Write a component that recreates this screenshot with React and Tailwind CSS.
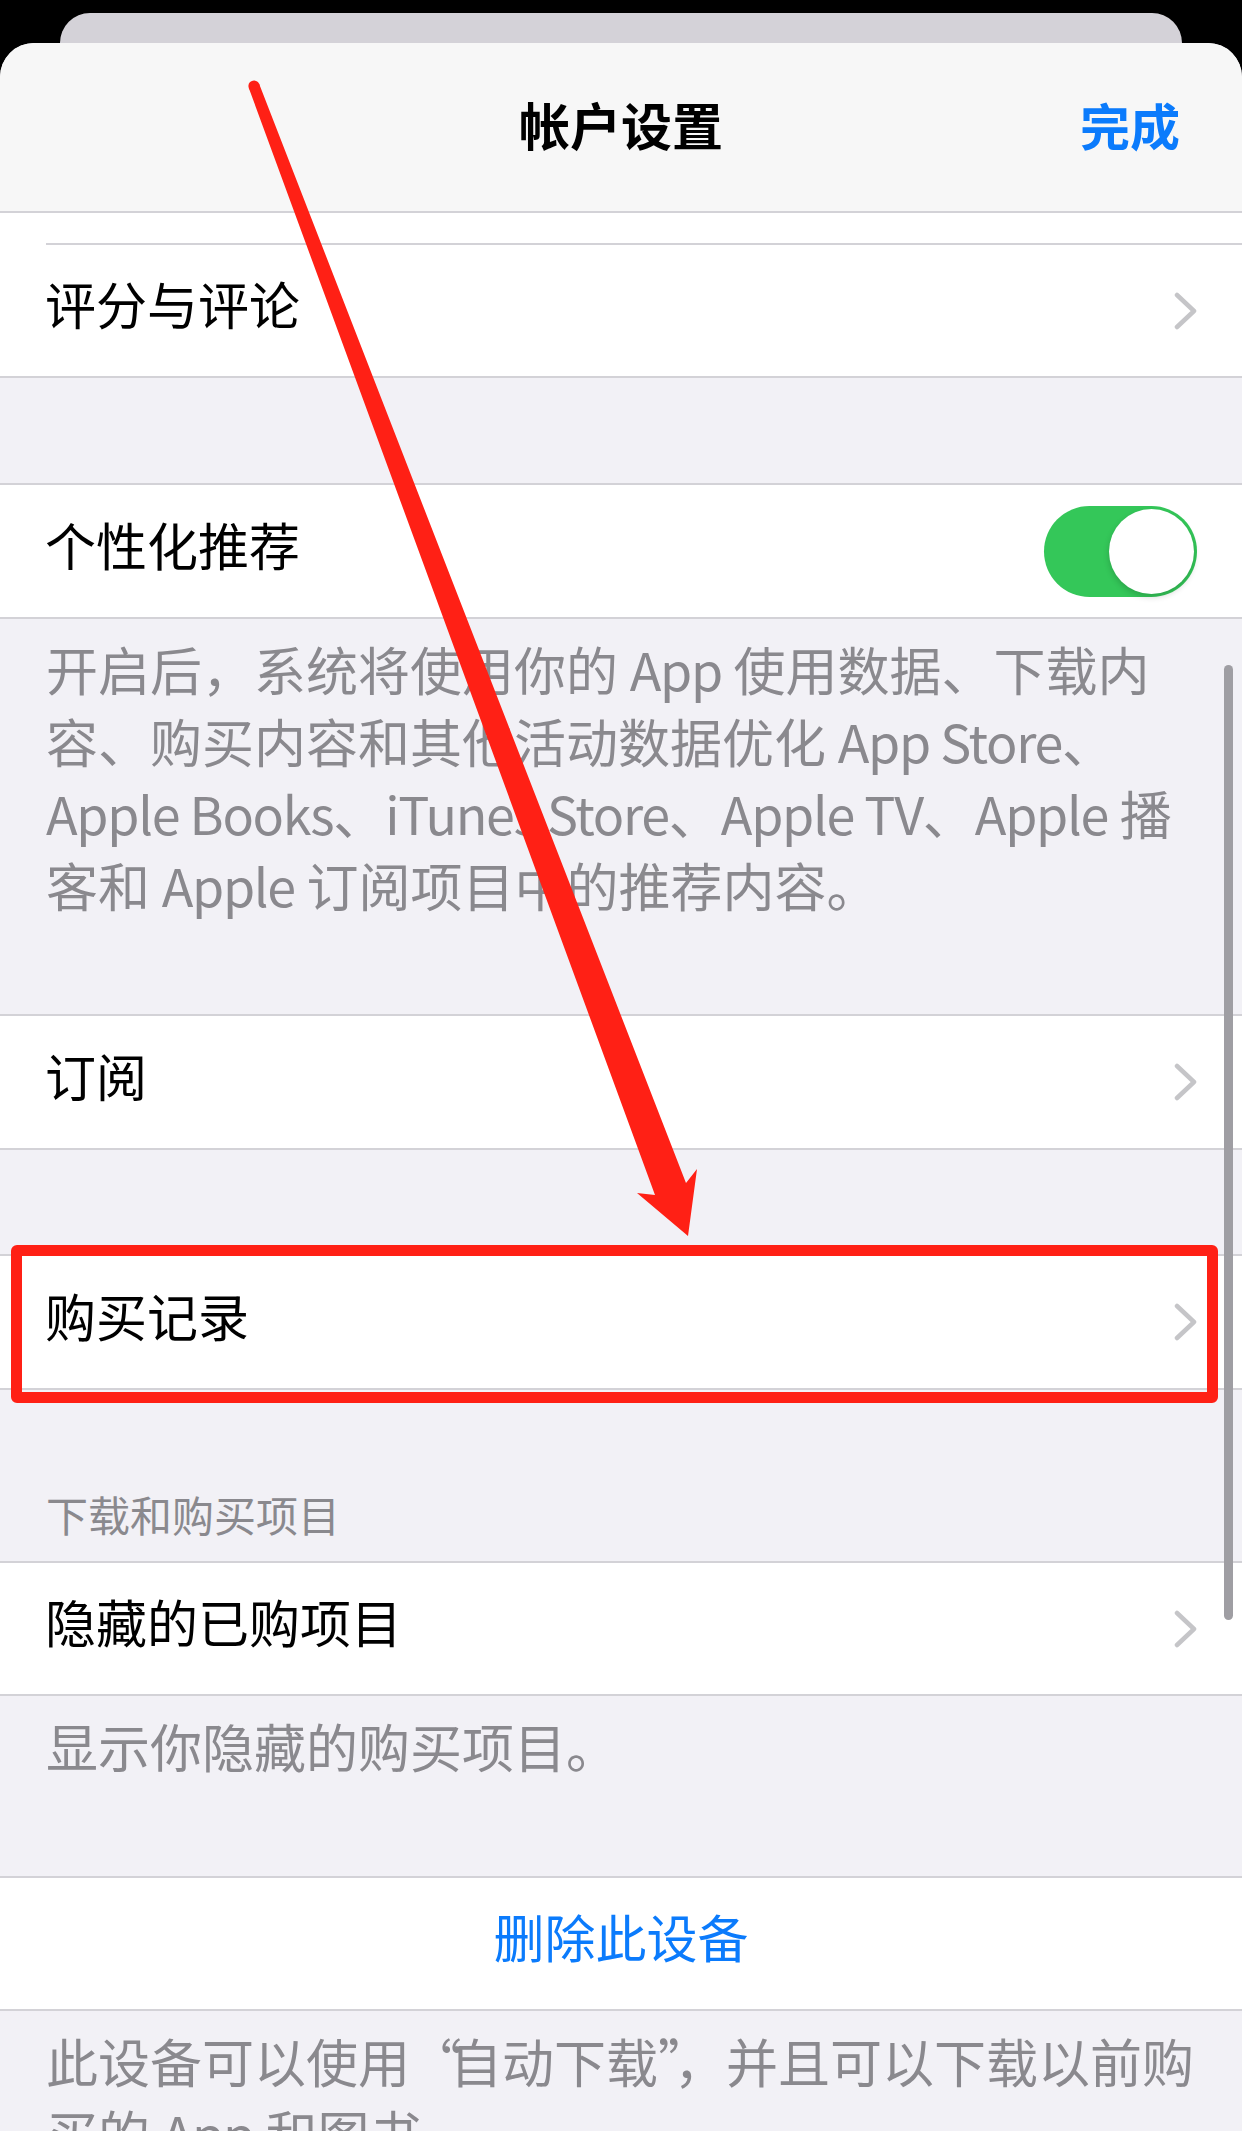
import React from "react";

const FONT = { fontFamily: '"Noto Sans CJK SC", "Noto Sans", sans-serif' };

function Chevron() {
  return (
    <svg width="23" height="38" viewBox="0 0 23 38" className="shrink-0">
      <polyline
        points="3,3 20,19 3,35"
        fill="none"
        stroke="#c5c5c8"
        strokeWidth="4.5"
        strokeLinecap="round"
        strokeLinejoin="round"
      />
    </svg>
  );
}

function Line({ inset = false }) {
  return (
    <div className={inset ? "h-[2px] bg-white pl-[46px]" : "h-[2px] bg-[#d3d2d7]"}>
      {inset ? <div className="h-[2px] bg-[#d3d2d7]" /> : null}
    </div>
  );
}

function Row({ label, right, h = "h-[132px]" }) {
  return (
    <div className={`${h} bg-white flex items-center justify-between pl-[45px] pr-[45px]`}>
      <span className="mb-[14px] text-[51px] leading-none text-black">{label}</span>
      {right}
    </div>
  );
}

function Toggle() {
  return (
    <div className="w-[153px] h-[91px] rounded-full bg-[#34c759] flex items-center justify-end p-[3px]">
      <div className="w-[85px] h-[85px] rounded-full bg-white shadow-[0_3px_6px_rgba(0,0,0,0.18)]" />
    </div>
  );
}

function L({ children }) {
  return <span className="tracking-[-1.3px]">{children}</span>;
}

function Footer({ lines, className }) {
  return (
    <div className={`px-[46px] text-[52px] leading-[72px] text-[#8a898e] ${className}`}>
      {lines.map((l, i) => (
        <div key={i} className="whitespace-nowrap">
          {l}
        </div>
      ))}
    </div>
  );
}

export default function App() {
  return (
    <div className="relative w-[1242px] h-[2131px] overflow-hidden bg-black" style={FONT}>
      <div className="pt-[13px]">
        <div className="mx-[60px] h-[30px] rounded-t-[30px] bg-[#d4d2d8]" />
        <div className="rounded-t-[34px] overflow-hidden bg-[#f2f1f6]">
          {/* nav bar */}
          <div className="h-[168px] bg-[#f7f7f7] grid grid-cols-[1fr_auto_1fr] items-center">
            <div />
            <div className="mb-[5px] text-[51px] leading-none font-semibold text-black">帐户设置</div>
            <div className="mb-[6px] justify-self-end pr-[62px] text-[50px] leading-none font-semibold text-[#0b7bfc]">
              完成
            </div>
          </div>
          <Line />
          <div className="h-[30px] bg-white" />
          <Line inset />
          <Row h="h-[131px]" label="评分与评论" right={<Chevron />} />
          <Line />

          <div className="h-[105px]" />
          <Line />
          <Row label="个性化推荐" right={<Toggle />} />
          <Line />
          <Footer
            className="pt-[14px] pb-[93px]"
            lines={[
              <>开启后，系统将使用你的 <L>App</L> 使用数据、下载内</>,
              <>容、购买内容和其他活动数据优化 <L>App Store</L>、</>,
              <><L>Apple Books</L>、<L>iTunes Store</L>、<L>Apple TV</L>、<L>Apple</L> 播</>,
              <>客和 <L>Apple</L> 订阅项目中的推荐内容。</>,
            ]}
          />

          <Line />
          <Row label="订阅" right={<Chevron />} />
          <Line />

          <div className="h-[104px]" />
          <Line />
          <Row label="购买记录" right={<Chevron />} />
          <Line />

          <div className="pt-[99px] pb-[22px] px-[46px] text-[42px] leading-[50px] text-[#8a898e]">
            下载和购买项目
          </div>
          <Line />
          <Row h="h-[131px]" label="隐藏的已购项目" right={<Chevron />} />
          <Line />
          <Footer className="pt-[14px] pb-[94px]" lines={["显示你隐藏的购买项目。"]} />

          <Line />
          <div className="h-[131px] bg-white flex items-center justify-center">
            <span className="mb-[14px] text-[51px] leading-none text-[#0b7bfc]">删除此设备</span>
          </div>
          <Line />
          <Footer
            className="pt-[14px] pb-[40px]"
            lines={[
              <>此设备可以使用<span className="tracking-[-12px]">“</span>自动下载<span className="tracking-[-10px]">”</span>，并且可以下载以前购</>,
              <>买的 <L>App</L> 和图书。</>,
            ]}
          />
        </div>
      </div>

      {/* scroll indicator */}
      <div className="absolute left-[1224px] top-[665px] w-[9px] h-[955px] rounded-full bg-[#9f9ea3]" />

      {/* red highlight box */}
      <div className="absolute left-[11px] top-[1245px] w-[1207px] h-[158px] border-[11px] border-[#ff2015] rounded-[6px]" />

      {/* red arrow */}
      <svg
        className="absolute left-0 top-0 pointer-events-none"
        width="1242"
        height="2131"
        viewBox="0 0 1242 2131"
      >
        <circle cx="254" cy="86" r="5.6" fill="#ff2015" />
        <polygon
          fill="#ff2015"
          points="248.8,88 655,1195 637,1193 688,1236 697,1169 686,1183 259.2,84"
        />
      </svg>
    </div>
  );
}
